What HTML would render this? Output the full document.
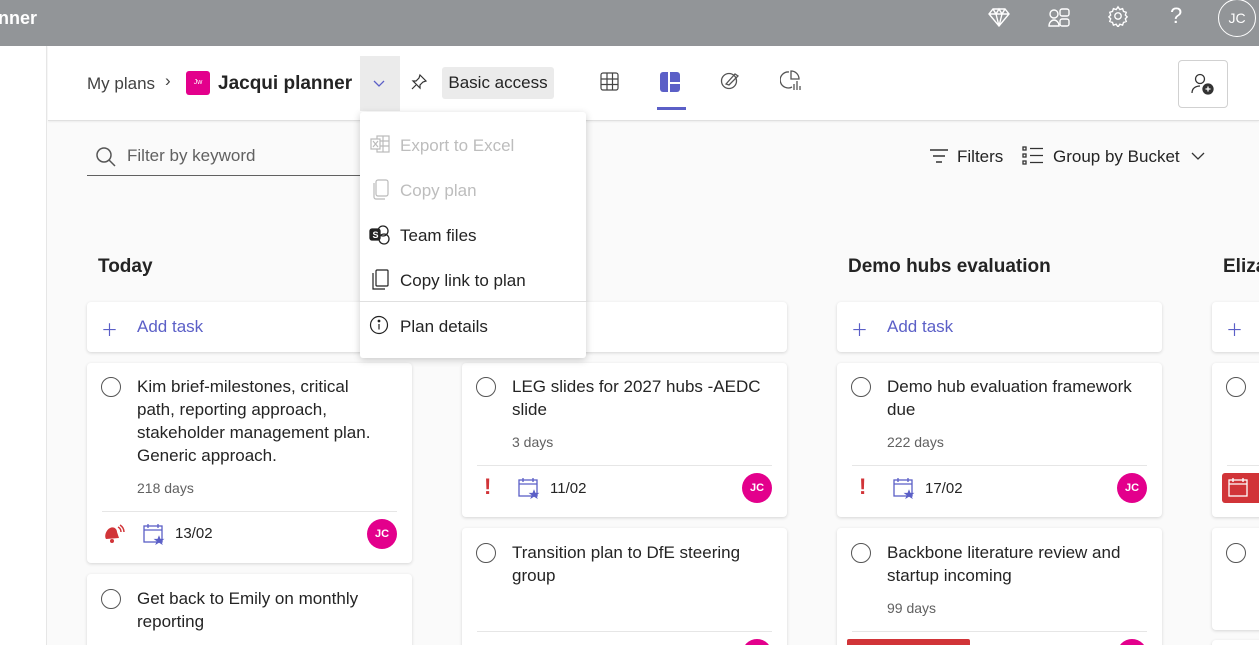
<!DOCTYPE html>
<html><head><style>
*{box-sizing:border-box;margin:0;padding:0}
html,body{width:1259px;height:645px;overflow:hidden}
body{font-family:"Liberation Sans",sans-serif;background:#fafafa;position:relative;color:#242424}
.top{position:absolute;left:0;top:0;width:1259px;height:46px;background:#929598}
.side{position:absolute;left:0;top:46px;width:47px;height:600px;background:#fff;border-right:1px solid #e6e6e6}
.hdr{position:absolute;left:48px;top:46px;right:0;height:75px;background:#fff;border-bottom:1px solid #e0e0e0;box-shadow:0 1px 2px rgba(0,0,0,.06)}
.a{position:absolute;white-space:nowrap}
.card{position:absolute;background:#fff;border-radius:4px;box-shadow:0 1px 3px rgba(0,0,0,.15)}
.circ{position:absolute;width:20px;height:20px;border:1.5px solid #555;border-radius:50%}
.t{position:absolute;font-size:17px;line-height:23px;color:#242424}
.d{position:absolute;font-size:14px;color:#616161}
.line{position:absolute;height:1px;background:#e6e6e6}
.av{position:absolute;width:30px;height:30px;border-radius:50%;background:#e3008c;color:#fff;font-size:11px;font-weight:bold;text-align:center;line-height:30px}
.h{position:absolute;font-size:19px;font-weight:bold}
.add{position:absolute;font-size:17px;color:#5b5fc7}
.menu{position:absolute;left:360px;top:112px;width:226px;height:246px;background:#fff;box-shadow:0 2px 8px rgba(0,0,0,.2);border-radius:3px}
.mi{position:absolute;left:40px;font-size:17px}
</style></head><body>
<div class="top"></div>
<div class="a" style="left:-2px;top:8px;color:#fff;font-size:18px;font-weight:bold">nner</div>
<svg class="a" style="left:988px;top:7px" width="22" height="20" viewBox="0 0 22 20" fill="none" stroke="#fff" stroke-width="1.4"><path d="M5 2h12l4 5-10 12L1 7z M1 7h20 M8 7l3 12 3-12 M5 2l3 5 3-5 3 5 3-5"/></svg>
<svg class="a" style="left:1047px;top:6px" width="24" height="24" viewBox="0 0 24 24" fill="none" stroke="#fff" stroke-width="1.4"><circle cx="7" cy="8" r="4"/><rect x="13" y="3" width="9" height="7" rx="2"/><path d="M2 20c0-4 3-6 5-6s5 2 5 6z"/><rect x="13" y="13" width="9" height="7" rx="2"/></svg>
<svg class="a" style="left:1107px;top:5px" width="22" height="22" viewBox="0 0 24 24" fill="none" stroke="#fff" stroke-width="1.5"><circle cx="12" cy="12" r="3.5"/><path d="M12 2l2 3 3-1 1 3 3 1-1 3 2 2-2 2 1 3-3 1-1 3-3-1-2 3-2-3-3 1-1-3-3-1 1-3-2-2 2-2-1-3 3-1 1-3 3 1z"/></svg>
<div class="a" style="left:1170px;top:3px;color:#fff;font-size:22px">?</div>
<div class="a" style="left:1218px;top:-1px;width:38px;height:38px;border:1.5px solid #fff;border-radius:50%;color:#fff;font-size:14px;text-align:center;line-height:36px">JC</div>
<div class="side"></div>
<div class="hdr"></div>
<div class="a" style="left:87px;top:74px;font-size:17px;color:#424242">My plans</div>
<div class="a" style="left:165px;top:71px;font-size:17px;color:#424242">›</div>
<div class="a" style="left:186px;top:71px;width:24px;height:24px;background:#e3008c;border-radius:3px;color:#fff;font-size:7px;text-align:center;line-height:24px">Jw</div>
<div class="a" style="left:218px;top:73px;font-size:19px;font-weight:bold">Jacqui planner</div>
<div class="a" style="left:360px;top:56px;width:40px;height:55px;background:#ebebeb"></div>
<svg class="a" style="left:372px;top:79px" width="14" height="10"><path d="M2 2l5 5 5-5" stroke="#5b5fc7" fill="none" stroke-width="1.3"/></svg>
<svg class="a" style="left:410px;top:73px" width="18" height="18" viewBox="0 0 18 18" fill="none" stroke="#333" stroke-width="1.2"><path d="M10 2l6 6-3 1-3 3 0 3-7-7h3l3-3zM6 12l-4 4"/></svg>
<div class="a" style="left:442px;top:67px;width:112px;height:32px;background:#ebebeb;border-radius:3px;font-size:17px;line-height:32px;text-align:center">Basic access</div>
<svg class="a" style="left:600px;top:72px" width="19" height="19" fill="none" stroke="#444" stroke-width="1.2"><rect x="1" y="1" width="17" height="17" rx="2"/><path d="M1 7h17M1 12.5h17M7 1v17M12.5 1v17"/></svg>
<svg class="a" style="left:660px;top:72px" width="20" height="20"><rect x="0" y="0" width="20" height="20" rx="3" fill="#5b5fc7"/><path d="M9 0v20M9 11h11" stroke="#fff" stroke-width="2"/></svg>
<div class="a" style="left:657px;top:107px;width:29px;height:3px;background:#5b5fc7"></div>
<svg class="a" style="left:720px;top:70px" width="20" height="20" fill="none" stroke="#555" stroke-width="1.3"><circle cx="9" cy="11" r="7.5"/><path d="M6 14l9-10 3 2-9 9z"/></svg>
<svg class="a" style="left:780px;top:70px" width="22" height="22" fill="none" stroke="#555" stroke-width="1.3"><path d="M9 2a8 8 0 1 0 3 15M11 1v8h8a8 8 0 0 0-8-8z"/><path d="M14 20v-6M17 20v-9M20 20v-4"/></svg>
<div class="a" style="left:1178px;top:60px;width:50px;height:48px;border:1px solid #d1d1d1;border-radius:4px;background:#fff"></div>
<svg class="a" style="left:1191px;top:72px" width="24" height="24" fill="none" stroke="#333" stroke-width="1.3"><circle cx="9" cy="7" r="4.5"/><path d="M1 21c0-5 4-7 8-7"/><circle cx="17" cy="17" r="5" fill="#333"/><path d="M17 14.5v5M14.5 17h5" stroke="#fff"/></svg>

<svg class="a" style="left:95px;top:146px" width="22" height="22" fill="none" stroke="#555" stroke-width="1.5"><circle cx="9" cy="9" r="7"/><path d="M14 14l6 6"/></svg>
<div class="a" style="left:127px;top:146px;font-size:17px;color:#616161">Filter by keyword</div>
<div class="a" style="left:87px;top:175px;width:275px;height:1px;background:#616161"></div>
<svg class="a" style="left:929px;top:148px" width="20" height="16" stroke="#333" stroke-width="1.5"><path d="M1 2h18M4 8h12M7 14h6"/></svg>
<div class="a" style="left:957px;top:147px;font-size:17px">Filters</div>
<svg class="a" style="left:1022px;top:146px" width="22" height="20" fill="none" stroke="#333" stroke-width="1.3"><rect x="1" y="1" width="3" height="3"/><rect x="1" y="8" width="3" height="3"/><rect x="1" y="15" width="3" height="3"/><path d="M8 2.5h13M8 9.5h13M8 16.5h13"/></svg>
<div class="a" style="left:1053px;top:147px;font-size:17px">Group by Bucket</div>
<svg class="a" style="left:1190px;top:151px" width="16" height="10"><path d="M2 2l6 6 6-6" stroke="#333" fill="none" stroke-width="1.3"/></svg>

<div class="h" style="left:98px;top:256px">Today</div>
<div class="h" style="left:848px;top:256px">Demo hubs evaluation</div>
<div class="h" style="left:1223px;top:256px">Eliza</div>

<div class="card" style="left:87px;top:302px;width:325px;height:50px"></div>
<div class="add" style="left:101px;top:316px">＋</div><div class="add" style="left:137px;top:317px">Add task</div>
<div class="card" style="left:462px;top:302px;width:325px;height:50px"></div>
<div class="card" style="left:837px;top:302px;width:325px;height:50px"></div>
<div class="add" style="left:851px;top:316px">＋</div><div class="add" style="left:887px;top:317px">Add task</div>
<div class="card" style="left:1212px;top:302px;width:60px;height:50px"></div>
<div class="add" style="left:1226px;top:316px">＋</div>

<!-- col1 -->
<div class="card" style="left:87px;top:363px;width:325px;height:200px"></div>
<div class="circ" style="left:101px;top:377px"></div>
<div class="t" style="left:137px;top:375px;width:248px">Kim brief-milestones, critical path, reporting approach, stakeholder management plan. Generic approach.</div>
<div class="d" style="left:137px;top:480px">218 days</div>
<div class="line" style="left:102px;top:511px;width:295px"></div>
<svg class="a" style="left:103px;top:523px" width="22" height="22"><path d="M3 16c-2-3 0-9 4-11 4-2 7 1 7 4l2 6z" fill="#d13438"/><circle cx="9" cy="18" r="2" fill="#d13438"/><path d="M15 4c2 1 3 3 3 5M17 2c3 2 4 4 4 7" stroke="#d13438" fill="none" stroke-width="1.5"/></svg>
<svg class="a" style="left:143px;top:523px" width="22" height="22" fill="none" stroke="#5b5fc7" stroke-width="1.3"><rect x="1" y="3" width="18" height="16"/><path d="M1 7h18M5 1v4M15 1v4"/><path d="M16 14l1 2.5h2.5l-2 1.5 1 2.5-2.5-1.5-2.5 1.5 1-2.5-2-1.5h2.5z" fill="#5b5fc7"/></svg>
<div class="a" style="left:175px;top:525px;font-size:15px">13/02</div>
<div class="av" style="left:367px;top:519px">JC</div>

<div class="card" style="left:87px;top:574px;width:325px;height:90px"></div>
<div class="circ" style="left:101px;top:589px"></div>
<div class="t" style="left:137px;top:587px;width:260px">Get back to Emily on monthly reporting</div>

<!-- col2 -->
<div class="card" style="left:462px;top:363px;width:325px;height:154px"></div>
<div class="circ" style="left:476px;top:377px"></div>
<div class="t" style="left:512px;top:375px;width:260px">LEG slides for 2027 hubs -AEDC slide</div>
<div class="d" style="left:512px;top:434px">3 days</div>
<div class="line" style="left:477px;top:465px;width:295px"></div>
<div class="a" style="left:484px;top:474px;font-size:22px;font-weight:bold;color:#d13438">!</div>
<svg class="a" style="left:518px;top:477px" width="22" height="22" fill="none" stroke="#5b5fc7" stroke-width="1.3"><rect x="1" y="3" width="18" height="16"/><path d="M1 7h18M5 1v4M15 1v4"/><path d="M16 14l1 2.5h2.5l-2 1.5 1 2.5-2.5-1.5-2.5 1.5 1-2.5-2-1.5h2.5z" fill="#5b5fc7"/></svg>
<div class="a" style="left:550px;top:480px;font-size:15px">11/02</div>
<div class="av" style="left:742px;top:473px">JC</div>
<div class="card" style="left:462px;top:528px;width:325px;height:140px"></div>
<div class="circ" style="left:476px;top:543px"></div>
<div class="t" style="left:512px;top:541px;width:260px">Transition plan to DfE steering group</div>
<div class="line" style="left:477px;top:631px;width:295px"></div>
<div class="av" style="left:742px;top:639px">JC</div>

<!-- col3 -->
<div class="card" style="left:837px;top:363px;width:325px;height:154px"></div>
<div class="circ" style="left:851px;top:377px"></div>
<div class="t" style="left:887px;top:375px;width:260px">Demo hub evaluation framework due</div>
<div class="d" style="left:887px;top:434px">222 days</div>
<div class="line" style="left:852px;top:465px;width:295px"></div>
<div class="a" style="left:859px;top:474px;font-size:22px;font-weight:bold;color:#d13438">!</div>
<svg class="a" style="left:893px;top:477px" width="22" height="22" fill="none" stroke="#5b5fc7" stroke-width="1.3"><rect x="1" y="3" width="18" height="16"/><path d="M1 7h18M5 1v4M15 1v4"/><path d="M16 14l1 2.5h2.5l-2 1.5 1 2.5-2.5-1.5-2.5 1.5 1-2.5-2-1.5h2.5z" fill="#5b5fc7"/></svg>
<div class="a" style="left:925px;top:480px;font-size:15px">17/02</div>
<div class="av" style="left:1117px;top:473px">JC</div>
<div class="card" style="left:837px;top:528px;width:325px;height:140px"></div>
<div class="circ" style="left:851px;top:543px"></div>
<div class="t" style="left:887px;top:541px;width:260px">Backbone literature review and startup incoming</div>
<div class="d" style="left:887px;top:600px">99 days</div>
<div class="line" style="left:852px;top:631px;width:295px"></div>
<div class="a" style="left:847px;top:639px;width:123px;height:10px;background:#d13438;border-radius:2px"></div>
<div class="av" style="left:1117px;top:639px">JC</div>

<!-- col4 -->
<div class="card" style="left:1212px;top:363px;width:60px;height:154px"></div>
<div class="circ" style="left:1226px;top:377px"></div>
<div class="line" style="left:1227px;top:465px;width:40px"></div>
<div class="a" style="left:1222px;top:473px;width:40px;height:30px;background:#d13438;border-radius:3px"></div>
<svg class="a" style="left:1228px;top:477px" width="22" height="22" fill="none" stroke="#fff" stroke-width="1.3"><rect x="1" y="3" width="18" height="16"/><path d="M1 7h18M5 1v4M15 1v4"/></svg>
<div class="card" style="left:1212px;top:528px;width:60px;height:102px"></div>
<div class="circ" style="left:1226px;top:543px"></div>
<div class="card" style="left:1212px;top:640px;width:60px;height:20px"></div>

<!-- menu -->
<div class="menu">
<svg class="a" style="left:10px;top:23px" width="20" height="18" fill="none" stroke="#bbb" stroke-width="1.2"><rect x="7" y="1" width="12" height="16"/><path d="M7 6h12M7 11h12M13 1v16"/><rect x="1" y="4" width="9" height="10" fill="#fff"/><path d="M3 6l5 6M8 6l-5 6"/></svg>
<div class="mi" style="top:24px;color:#bdbdbd">Export to Excel</div>
<svg class="a" style="left:12px;top:67px" width="18" height="22" fill="none" stroke="#bbb" stroke-width="1.2"><rect x="4" y="1" width="12" height="16" rx="2"/><path d="M2 4v14a2 2 0 0 0 2 2h9"/></svg>
<div class="mi" style="top:69px;color:#bdbdbd">Copy plan</div>
<svg class="a" style="left:9px;top:112px" width="22" height="22" fill="none" stroke="#222" stroke-width="1.3"><circle cx="14" cy="7" r="5"/><circle cx="15" cy="15" r="5"/><rect x="1" y="5" width="10" height="11" rx="2" fill="#222"/><text x="3.5" y="14" fill="#fff" stroke="none" font-size="9" font-weight="bold" font-family="Liberation Sans">S</text></svg>
<div class="mi" style="top:114px">Team files</div>
<svg class="a" style="left:11px;top:157px" width="20" height="22" fill="none" stroke="#222" stroke-width="1.2"><rect x="5" y="1" width="12" height="16" rx="1"/><path d="M2 4v16h12"/></svg>
<div class="mi" style="top:159px">Copy link to plan</div>
<div class="a" style="left:0;top:189px;width:226px;height:1px;background:#e0e0e0"></div>
<svg class="a" style="left:9px;top:203px" width="20" height="20" fill="none" stroke="#222" stroke-width="1.2"><circle cx="10" cy="10" r="8.5"/><path d="M10 9v5.5"/><circle cx="10" cy="6" r=".8" fill="#222"/></svg>
<div class="mi" style="top:205px">Plan details</div>
</div>
</body></html>
